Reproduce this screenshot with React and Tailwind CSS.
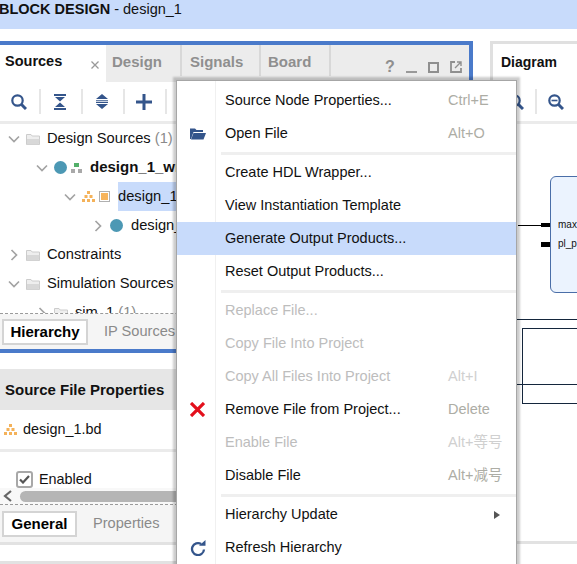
import React from "react";

const BLUE = "#34558b";

function Chevron({ dir = "down", className = "" }) {
  return (
    <svg width="12" height="12" viewBox="0 0 12 12" className={className} fill="none" stroke="#a3a3a3" strokeWidth="1.7">
      {dir === "down" ? <path d="M1 3.5 6 8.5 11 3.5" /> : <path d="M3.5 1 8.5 6 3.5 11" />}
    </svg>
  );
}
function Folder() {
  return (
    <svg width="14" height="12" viewBox="0 0 14 12" className="shrink-0">
      <path d="M0.5 1.5h4.5l1.2 1.5h7.3v8.5h-13z" fill="#eeeeee" stroke="#cccccc" />
      <path d="M1 6h12.5l-.8 5.5H1z" fill="#d8d8d8" />
    </svg>
  );
}
function Dot() {
  return <span className="w-[13px] h-[13px] rounded-full bg-[#4c98b4] shrink-0" />;
}
function Hier() {
  const c = "#f4b25a";
  return (
    <svg width="13" height="11" viewBox="0 0 13 11" className="shrink-0">
      <rect x="5" y="0" width="3" height="3" fill={c} />
      <rect x="2.5" y="4" width="3" height="3" fill={c} />
      <rect x="7.5" y="4" width="3" height="3" fill={c} />
      <rect x="0" y="8" width="3" height="3" fill={c} />
      <rect x="5" y="8" width="3" height="3" fill={c} />
      <rect x="10" y="8" width="3" height="3" fill={c} />
    </svg>
  );
}
function HierGreen() {
  return (
    <svg width="11" height="10" viewBox="0 0 11 10" className="shrink-0 block">
      <rect x="3" y="0" width="5" height="4" fill="#53b06a" />
      <rect x="0" y="6" width="4" height="4" fill="#a9a9a9" />
      <rect x="7" y="6" width="4" height="4" fill="#a9a9a9" />
    </svg>
  );
}
function Search() {
  return (
    <svg width="16" height="16" viewBox="0 0 16 16" fill="none" stroke={BLUE} strokeWidth="2.2" className="block">
      <circle cx="6.5" cy="6.5" r="5.2" />
      <path d="M10.5 10.5 15 15" strokeWidth="3" />
    </svg>
  );
}
function Sep() {
  return <span className="w-[2px] h-[25px] bg-[#e6e6e6] shrink-0" />;
}
function ToolCell({ width = 40, children }) {
  return (
    <span className="flex justify-center pr-[2px] shrink-0" style={{ width }}>
      {children}
    </span>
  );
}

function TreeRow({ pad, dir, children }) {
  return (
    <div className="h-[29px] flex items-center text-[14.7px] text-[#111] whitespace-nowrap" style={{ paddingLeft: pad }}>
      <Chevron dir={dir} className="shrink-0 mr-[6px]" />
      {children}
    </div>
  );
}

function SubTab({ active, children, width }) {
  return (
    <div
      className={
        active
          ? "h-[26px] flex items-center justify-center pt-px border-2 border-[#d4d4d4] bg-white font-bold text-[15px] text-black"
          : "h-[26px] flex items-center pt-px text-[14.6px] text-[#8a8a8a] pl-[16px]"
      }
      style={{ width }}
    >
      {children}
    </div>
  );
}

function Tab({ w, pl, children }) {
  return (
    <div className="h-[31px] flex items-center pt-[3px] border-r-2 border-[#d8d8d8] font-bold text-[15px] text-[#8f8f8f] shrink-0" style={{ width: w, paddingLeft: pl }}>
      {children}
    </div>
  );
}

function MenuItem({ label, short, icon, disabled, sub, active, shortLight }) {
  return (
    <div className={`h-[33px] flex items-center relative whitespace-nowrap text-[14.5px] ${active ? "bg-[#c8dbfb]" : ""} ${disabled ? "text-[#bdbdbd]" : "text-[#111]"}`}>
      <span className="w-[41px] flex justify-center shrink-0">{icon}</span>
      <span className="pl-[7px] flex-1">{label}</span>
      {short && <span className={`w-[68px] ${shortLight ? "text-[#d0d0d0]" : "text-[#adada5]"}`}>{short}</span>}
      {sub && (
        <svg width="6" height="8" viewBox="0 0 6 8" className="mr-[16px]">
          <path d="M0 0 6 4 0 8z" fill="#555" />
        </svg>
      )}
    </div>
  );
}
function MenuSep() {
  return (
    <div className="h-[6px] flex items-center pl-[44px]">
      <div className="h-[3px] w-full bg-[#efefef]" />
    </div>
  );
}

function ContextMenu() {
  return (
    <div className="absolute left-[176px] top-[80px] w-[341px] h-[490px] bg-white border border-[#a6a6a6] pt-[3px] shadow-[0_0_2px_3px_rgba(0,0,0,0.2)]">
      <div className="absolute left-[38px] top-0 bottom-0 w-px bg-[#f0f0f0]" />
      <MenuItem label="Source Node Properties..." short="Ctrl+E" />
      <MenuItem
        label="Open File"
        short="Alt+O"
        icon={
          <svg width="16" height="13" viewBox="0 0 16 13">
            <path d="M0 1.5h5l1.5 1.5H13v2H3.5L1 12H0z" fill={BLUE} />
            <path d="M3.5 6H16l-2.5 6.5H1z" fill={BLUE} />
          </svg>
        }
      />
      <MenuSep />
      <MenuItem label="Create HDL Wrapper..." />
      <MenuItem label="View Instantiation Template" />
      <MenuItem label="Generate Output Products..." active />
      <MenuItem label="Reset Output Products..." />
      <MenuSep />
      <MenuItem label="Replace File..." disabled />
      <MenuItem label="Copy File Into Project" disabled />
      <MenuItem label="Copy All Files Into Project" short="Alt+I" shortLight disabled />
      <MenuItem
        label="Remove File from Project..."
        short="Delete"
        icon={
          <svg width="15" height="15" viewBox="0 0 15 15" stroke="#e3101c" strokeWidth="3.2" fill="none">
            <path d="M1 1 14 14M14 1 1 14" />
          </svg>
        }
      />
      <MenuItem label="Enable File" short="Alt+等号" shortLight disabled />
      <MenuItem label="Disable File" short="Alt+减号" />
      <MenuSep />
      <MenuItem label="Hierarchy Update" sub />
      <MenuItem
        label="Refresh Hierarchy"
        icon={
          <svg width="16" height="16" viewBox="0 0 16 16" fill="none" stroke={BLUE} strokeWidth="2.3">
            <path d="M14 9.5A6 6 0 1 1 11.2 4" />
            <path d="M9 5.8H15.5V0z" fill={BLUE} stroke="none" />
          </svg>
        }
      />
    </div>
  );
}

function Diagram() {
  return (
    <div className="relative flex-1 overflow-hidden text-[10px] text-[#111]">
      <div className="absolute left-[57px] top-[52px] w-[60px] h-[117px] rounded-[6px] bg-[#ebf3fe] border border-[#4a6ea8]" />
      <div className="absolute left-[25px] top-[101px] w-[24px] h-px bg-black" />
      <div className="absolute left-[48px] top-[99px] w-[9px] h-[4px] bg-black" />
      <div className="absolute left-[48px] top-[118px] w-[9px] h-[5px] bg-black" />
      <span className="absolute left-[65px] top-[95px] leading-[12px]">max</span>
      <span className="absolute left-[65px] top-[114px] leading-[12px]">pl_p</span>
      <div className="absolute left-[24px] top-[195px] w-[100px] h-px bg-[#14263c]" />
      <div className="absolute left-[29px] top-[204px] w-[70px] h-[76px] border border-[#14263c]" />
      <div className="absolute left-[24px] top-[260px] w-[100px] h-px bg-[#14263c]" />
    </div>
  );
}

export default function App() {
  return (
    <div className="relative w-[577px] h-[564px] overflow-hidden bg-white font-['Liberation_Sans','Noto_Sans_CJK_SC',sans-serif]">
      <div className="h-[29px] bg-[#c8dbfb] flex items-center text-[14.5px] text-[#111] whitespace-nowrap pb-[9px]">
        <span className="font-bold ml-[-1px]">BLOCK DESIGN</span>
        <span className="ml-[4px]">- design_1</span>
      </div>
      <div className="h-[12px]" />
      <div className="flex h-[523px]">
        {/* left column */}
        <div className="w-[473px] shrink-0 flex flex-col">
          <div className="h-[312px] border-t-4 border-r-4 border-b-4 border-[#4a7aca] flex flex-col">
            <div className="h-[37px] flex items-start bg-[#ececec] shrink-0 relative">
              <div className="w-[106px] h-[37px] bg-white flex items-center justify-between pl-[5px] pr-[7px] pb-[3px] font-bold text-[14.5px] text-[#111]">
                <span>Sources</span>
                <svg width="8" height="8" viewBox="0 0 8 8" stroke="#999" strokeWidth="1.3" className="mt-[5px]">
                  <path d="M0.5 0.5 7.5 7.5M7.5 0.5 0.5 7.5" />
                </svg>
              </div>
              <Tab w={76} pl={6}>Design</Tab>
              <Tab w={79} pl={8}>Signals</Tab>
              <Tab w={70} pl={7}>Board</Tab>
              <div className="flex-1 flex items-center gap-[11px] pl-[54px] pt-[7px] h-[37px]">
                <span className="font-bold text-[16px] leading-none text-[#8f8f8f] w-[10px]">?</span>
                <span className="w-[11px] h-[2px] bg-[#999] mt-[9px]" />
                <span className="w-[11px] h-[11px] border-2 border-[#8f8f8f]" />
                <svg width="12" height="12" viewBox="0 0 12 12" fill="none" stroke="#8f8f8f" strokeWidth="1.8">
                  <path d="M5 1H1v10h10V7" />
                  <path d="M5 7 11 1M7 1h4v4" strokeWidth="1.4" />
                </svg>
              </div>
            </div>
            <div className="h-[42px] flex items-center bg-white border-b-[3px] border-[#ebebeb] shrink-0">
              <ToolCell width={39}><Search /></ToolCell>
              <Sep />
              <ToolCell>
                <svg width="14" height="16" viewBox="0 0 14 16" className="block">
                  <path d="M1 0h12v2H1zM1 14h12v2H1zM2 3h10L7 7.5zM2 13h10L7 8.5z" fill={BLUE} />
                </svg>
              </ToolCell>
              <Sep />
              <ToolCell>
                <svg width="12" height="15" viewBox="0 0 12 15" className="block">
                  <path d="M6 0 12 5H0zM6 15 0 10h12zM0 6.2h12v1H0zM0 8h12v1H0z" fill={BLUE} />
                </svg>
              </ToolCell>
              <Sep />
              <ToolCell>
                <svg width="16" height="16" viewBox="0 0 16 16" fill={BLUE} className="block">
                  <path d="M6.5 0h3v6.5H16v3H9.5V16h-3V9.5H0v-3h6.5z" />
                </svg>
              </ToolCell>
              <Sep />
            </div>
            <div className="h-[190px] overflow-hidden shrink-0 border-b border-dashed border-[#9a9a9a]">
              <TreeRow pad={8} dir="down">
                <Folder />
                <span className="ml-[7px]">Design Sources <span className="text-[#8a8a8a]">(1)</span></span>
              </TreeRow>
              <TreeRow pad={36} dir="down">
                <Dot />
                <span className="ml-[4px]"><HierGreen /></span>
                <span className="ml-[8px] font-bold text-[15px]">design_1_wrapper</span>
              </TreeRow>
              <TreeRow pad={64} dir="down">
                <Hier />
                <span className="ml-[4px] w-[11px] h-[11px] border border-[#b0b0b0] p-px shrink-0 flex">
                  <span className="flex-1 bg-[#f7b45c]" />
                </span>
                <span className="ml-[8px] bg-[#c8dbfb] h-[29px] flex items-center w-[58px]">design_1</span>
              </TreeRow>
              <TreeRow pad={92} dir="right">
                <Dot />
                <span className="ml-[8px]">design_1_i</span>
              </TreeRow>
              <TreeRow pad={8} dir="right">
                <Folder />
                <span className="ml-[7px]">Constraints</span>
              </TreeRow>
              <TreeRow pad={8} dir="down">
                <Folder />
                <span className="ml-[7px]">Simulation Sources</span>
              </TreeRow>
              <TreeRow pad={36} dir="right">
                <Folder />
                <span className="ml-[7px]">sim_1 <span className="text-[#8a8a8a]">(1)</span></span>
              </TreeRow>
            </div>
            <div className="flex-1 bg-[#f5f5f5] flex items-center pl-[2px]">
              <SubTab active width={86}>Hierarchy</SubTab>
              <SubTab width={120}>IP Sources</SubTab>
            </div>
          </div>
          <div className="h-[16px] shrink-0" />
          <div className="h-[41px] shrink-0 bg-[#e6e6e6] flex items-center pl-[5px] pt-[1px] font-bold text-[15px] text-[#111]">Source File Properties</div>
          <div className="h-[39px] shrink-0 flex items-center pl-[4px] gap-[6px] text-[14.4px] text-[#111]">
            <Hier />
            <span>design_1.bd</span>
          </div>
          <div className="h-[3px] bg-[#ebebeb] shrink-0" />
          <div className="h-[36px] shrink-0 flex items-end pl-[16px] gap-[6px] text-[14.4px] text-[#111] overflow-hidden">
            <span className="w-[17px] h-[17px] rounded-[3px] border-2 border-[#a8a8a8] flex items-center justify-center shrink-0">
              <svg width="11" height="9" viewBox="0 0 11 9" fill="none" stroke="#555" strokeWidth="2.2">
                <path d="M1 4.5 4 7.5 10 1" />
              </svg>
            </span>
            <span className="leading-[17px]">Enabled</span>
          </div>
          <div className="h-[17px] shrink-0 bg-[#f8f8f8] border-b border-dashed border-[#9a9a9a] flex items-center gap-[7px] pl-[3px]">
            <svg width="10" height="12" viewBox="0 0 10 12" fill="none" stroke="#666" strokeWidth="2.2">
              <path d="M8 1 2 6 8 11" />
            </svg>
            <span className="h-[11px] flex-1 rounded-l-full bg-[#b5b5b5]" />
          </div>
          <div className="h-[40px] shrink-0 bg-[#f5f5f5] flex items-center pl-[2px] border-b-[3px] border-[#e2e2e2]">
            <SubTab active width={75}>General</SubTab>
            <SubTab width={90}>Properties</SubTab>
          </div>
          <div className="h-[16px] shrink-0" />
          <div className="h-[3px] shrink-0 bg-[#e2e2e2]" />
        </div>
        {/* right column */}
        <div className="flex-1 ml-[17px] flex flex-col border-l-[3px] border-t-[3px] border-[#e0e0e0]">
          <div className="h-[38px] flex items-center pl-[8px] font-bold text-[14px] text-[#111] shrink-0 pb-[2px]">Diagram</div>
          <div className="h-[42px] shrink-0 flex items-center border-b-[3px] border-[#ebebeb]">
            <span className="ml-[15px]"><Search /></span>
            <span className="ml-[11px] flex"><Sep /></span>
            <span className="ml-[11px]">
              <svg width="16" height="16" viewBox="0 0 16 16" fill="none" stroke={BLUE} strokeWidth="2.2" className="block">
                <circle cx="6.5" cy="6.5" r="5.2" />
                <path d="M10.5 10.5 15 15" strokeWidth="3" />
                <path d="M3.5 6.5h6" strokeWidth="1.6" />
              </svg>
            </span>
          </div>
          <Diagram />
          <div className="h-[23px] shrink-0 border-t-[3px] border-[#e2e2e2]" />
        </div>
      </div>
      <ContextMenu />
    </div>
  );
}
